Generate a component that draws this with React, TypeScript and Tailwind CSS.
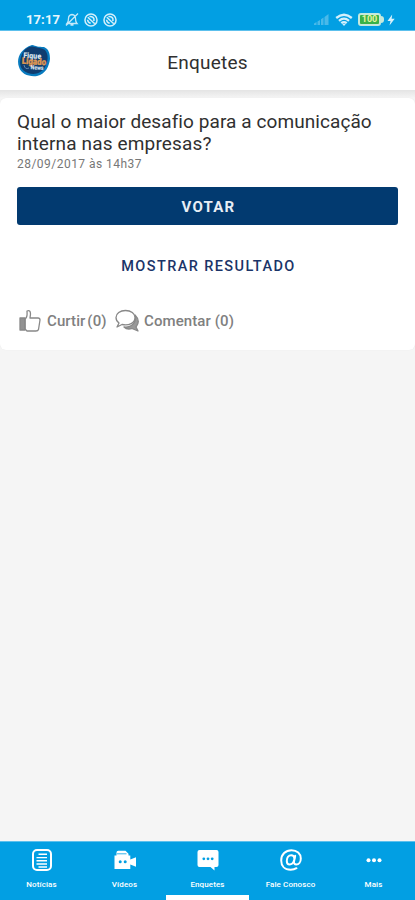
import type { ReactNode } from 'react';
import clsx from 'clsx';

interface Tab {
  label: string;
  icon: ReactNode;
  active?: boolean;
}

const NewsIcon = () => (
  <svg width="22" height="24" viewBox="0 0 22 24" fill="none" stroke="white">
    <rect x="2" y="2" width="18" height="20" rx="4" strokeWidth="2" />
    <path d="M7.5 6.2h8.5M5.5 9.6h10.5M5.5 12.8h10.5M5.5 16h10.5M7.5 19h8.5" strokeWidth="1.4" />
  </svg>
);

const VideoIcon = () => (
  <svg width="24" height="24" viewBox="0 0 24 24" fill="white">
    <path d="M3.5 6.8V4.5A1.8 1.8 0 0 1 5.3 2.7H12.5L15.5 5.7V7.5H17.3V11.5L23 9.2V18.8L17.3 16.5V21H1.5V7.5H3.5Z" />
    <path d="M4 5.8H13.5" stroke="#029fe3" strokeWidth="0.8" />
    <circle cx="7.2" cy="13.8" r="1.5" fill="#029fe3" />
    <circle cx="12.2" cy="13.8" r="1.5" fill="#029fe3" />
  </svg>
);

const PollIcon = () => (
  <svg width="24" height="24" viewBox="0 0 24 24">
    <path d="M3.5 2H20.5Q22.5 2 22.5 4V17Q22.5 19 20.5 19H18.5V22.5L14.5 19H3.5Q1.5 19 1.5 17V4Q1.5 2 3.5 2Z" fill="white" />
    <g fill="#029fe3">
      <circle cx="7.8" cy="10.8" r="1.4" />
      <circle cx="12" cy="10.8" r="1.4" />
      <circle cx="16.2" cy="10.8" r="1.4" />
    </g>
  </svg>
);

const AtIcon = () => (
  <svg width="24" height="24" viewBox="0 0 24 24" fill="none" stroke="white" strokeWidth="2" strokeLinecap="round">
    <path d="M17.5 20.2Q15.2 21.7 11.6 21.7C5.5 21.7 2.2 17.7 2.2 12.4C2.2 6.3 6.6 2.2 12.5 2.2C18 2.2 21.8 5.5 21.8 10.5C21.8 14.2 19.7 16.5 17.3 16.5C15.5 16.5 14.7 15.2 15 13.6L16.2 7.8" />
    <path d="M15.4 10.2C15.2 8.2 14 7.2 12.2 7.2C9.5 7.2 7.8 9.8 7.8 12.9C7.8 15 8.9 16.4 10.7 16.4C12.9 16.4 14.4 14.5 15 12.5" />
  </svg>
);

const MoreIcon = () => (
  <svg width="24" height="24" viewBox="0 0 24 24" fill="white">
    <circle cx="6.5" cy="12.3" r="2" />
    <circle cx="12" cy="12.3" r="2" />
    <circle cx="17.5" cy="12.3" r="2" />
  </svg>
);

const tabs: Tab[] = [
  { label: 'Notícias', icon: <NewsIcon /> },
  { label: 'Vídeos', icon: <VideoIcon /> },
  { label: 'Enquetes', icon: <PollIcon />, active: true },
  { label: 'Fale Conosco', icon: <AtIcon /> },
  { label: 'Mais', icon: <MoreIcon /> },
];

const Blocked = () => (
  <svg width="14" height="14" viewBox="0 0 13 13" fill="none" stroke="#d3effb" strokeWidth="1.4">
    <circle cx="6.5" cy="6.5" r="5.6" />
    <path d="M3.5 4L10 10M5 3.3Q8.3 2.8 9.2 5.4V7.5M3.3 6.3Q3.5 9 6.2 9.5" />
  </svg>
);

function StatusBar() {
  return (
    <div className="flex h-[31px] shrink-0 items-start justify-between border-b border-[#5cc0ed] bg-[#029fe3] pl-[26px] pr-[20px] pt-[12px]">
      <div className="flex items-center">
        <span className="w-[39px] text-[13px] font-bold leading-[15px] tracking-[0.1px] text-[#e8f7fd]">17:17</span>
        <svg className="mr-[5px]" width="14" height="15" viewBox="0 0 14 15" fill="none" stroke="#c5e9f9" strokeWidth="1.3">
          <path d="M2 11.5Q3.5 10 3.5 6.5Q3.5 3 7 2.5Q10.5 3 10.5 6.5Q10.5 10 12 11.5ZM5.5 13H8.5M1 13.5L13 1.5" />
        </svg>
        <div className="flex gap-[5px]">
          <Blocked />
          <Blocked />
        </div>
      </div>
      <div className="flex h-[15px] items-center">
        <svg className="mr-[5px]" width="17" height="13" viewBox="0 0 17 13" fill="#4ab9e9">
          <path d="M1 12V10.5L3.5 9V12ZM4.5 12V8.5L7 7V12ZM8 12V6.3L10.5 4.5V12ZM11.5 12V4L15.5 1V12Z" />
        </svg>
        <svg className="mr-[5px]" width="18" height="14" viewBox="0 0 18 14" fill="none" stroke="#d3effb" strokeWidth="2.3">
          <path d="M1.2 5Q9 -1.5 16.8 5M4 7.8Q9 3.5 14 7.8M6.3 10.2Q9 8 11.7 10.2" />
          <path d="M7 10.8L9 13L11 10.8Z" fill="#d3effb" stroke="none" />
        </svg>
        <div className="flex h-[13px] w-[23px] items-center justify-center rounded-[3px] border-2 border-[#c5e9dc] bg-[#38b249] text-[9px] font-bold leading-none text-[#e5f5a0]">
          100
        </div>
        <div className="mr-[3px] h-[7px] w-[3px] rounded-r-sm bg-[#c5e9dc]" />
        <svg width="8" height="12" viewBox="0 0 8 12" fill="#d8f1fb">
          <path d="M5.2 0.5L0.5 7H3.5L2.5 11.5L7.7 4.8H4.6Z" />
        </svg>
      </div>
    </div>
  );
}

const Logo = () => (
  <svg width="34" height="34" viewBox="0 0 34 34">
    <path d="M15 1C19 2 21 3 27 3C32 5 33 10 33 15C32 22 29 30 20 32C12 33 4 30 2 23C-1 15 3 5 15 1Z" fill="#087bbf" />
    <path d="M15 2.5C21 3.5 25 4 28 6C32 11 31 17 28 23C24 30 17 31 11 29C3 26 2 20 4 13C6 6 10 3 15 2.5Z" fill="#103d70" />
    <g fontFamily="Roboto, sans-serif" fontWeight="900" transform="rotate(3 17 17)">
      <text x="6" y="14.5" fontSize="8" fill="#dce5ef" textLength="18" lengthAdjust="spacingAndGlyphs">Fique</text>
      <text x="5" y="20.5" fontSize="9" fill="#e09a50" stroke="#e09a50" strokeWidth="0.3" textLength="24" lengthAdjust="spacingAndGlyphs">Ligado</text>
      <text x="14" y="25.5" fontSize="6" fill="#dce5ef" textLength="13" lengthAdjust="spacingAndGlyphs">News</text>
    </g>
    <path d="M7 21Q8 26 12 24" fill="none" stroke="#6389ae" />
  </svg>
);

function PollCard() {
  return (
    <section className="h-[252px] shrink-0 rounded-md bg-white px-[17px] pt-[13px] shadow-[0_0_1px_rgba(0,0,0,0.08)]">
      <h2 className="whitespace-nowrap text-[19px] leading-[22px] tracking-[0.08px] text-[#303030]">
        Qual o maior desafio para a comunicação
        <br />
        <span className="tracking-[0.15px]">interna nas empresas?</span>
      </h2>
      <p className="mt-px text-[12px] leading-[16px] tracking-[0.47px] text-[#777]">28/09/2017 às 14h37</p>
      <button className="mt-[15px] block h-[38px] w-[381px] rounded-[3px] bg-[#023a70] pl-[2px] pt-[2px] text-[15px] font-bold tracking-[1.2px] text-[#e8eef5]">
        VOTAR
      </button>
      <button className="mt-[27px] block h-[30px] w-full pl-[2px] text-[14.5px] font-medium tracking-[1.4px] text-[#1b3468]">
        MOSTRAR RESULTADO
      </button>
      <div className="mt-[27px] flex h-[24px] items-center text-[15px] font-medium text-[#808080]">
        <svg className="ml-[2px] mr-[6px]" width="22" height="24" viewBox="0 0 22 24" fill="none" stroke="#888" strokeWidth="1.3" strokeLinejoin="round">
          <path d="M1 9H6V21H1Z" fill="#929292" />
          <path d="M6 10C9 8 8 5 8 2Q11.5 0.5 11.5 5L11 9H19Q21 9 21 11L19.5 20.5Q19 22 17 22H8L6 20Z" />
        </svg>
        <span className="w-[68px] whitespace-nowrap tracking-[0.1px] [word-spacing:-2px]">Curtir (0)</span>
        <svg className="mr-[5px]" width="24" height="24" viewBox="0 0 24 24" stroke="#888" strokeWidth="1.3" strokeLinejoin="round">
          <path d="M20 6Q26 12 21 18L23 22L17 19.5Q12 21 9 18Q17 19 20 12Z" fill="#999" />
          <path d="M10.5 1.5C5 1.5 1 4.500 1 8.500C1 11 2.500 13 4 14L2 18L7 15.500C14 17 20 14 20 8.500C20 4.500 16 1.500 10.500 1.500Z" fill="white" />
        </svg>
        <span className="whitespace-nowrap tracking-[0.1px]">Comentar (0)</span>
      </div>
    </section>
  );
}

function TabBar() {
  return (
    <nav className="grid h-[59px] shrink-0 grid-cols-5 border-t border-[#5cc0ed] bg-[#029fe3]">
      {tabs.map(tab => (
        <button key={tab.label} className="flex flex-col items-center pt-[6px] text-white">
          {tab.icon}
          <span className="mt-[8px] whitespace-nowrap text-[8px] font-medium leading-[10px] tracking-[0.1px]">{tab.label}</span>
          <span className={clsx('mt-auto h-[5px] w-full', tab.active && 'bg-white')} />
        </button>
      ))}
    </nav>
  );
}

export default function App() {
  return (
    <div className="flex h-screen w-full flex-col overflow-hidden bg-[#f5f5f5] font-[Roboto,sans-serif]">
      <StatusBar />
      <header className="grid h-[59px] shrink-0 grid-cols-[1fr_auto_1fr] items-center bg-white px-[17px]">
        <Logo />
        <h1 className="pt-[5px] text-[19px] tracking-[0.25px] text-[#303030]">Enquetes</h1>
      </header>
      <div className="h-[8px] shrink-0 bg-linear-to-b from-[#e4e4e4] to-[#f5f5f5]" />
      <main className="flex flex-1 flex-col">
        <PollCard />
      </main>
      <TabBar />
    </div>
  );
}
